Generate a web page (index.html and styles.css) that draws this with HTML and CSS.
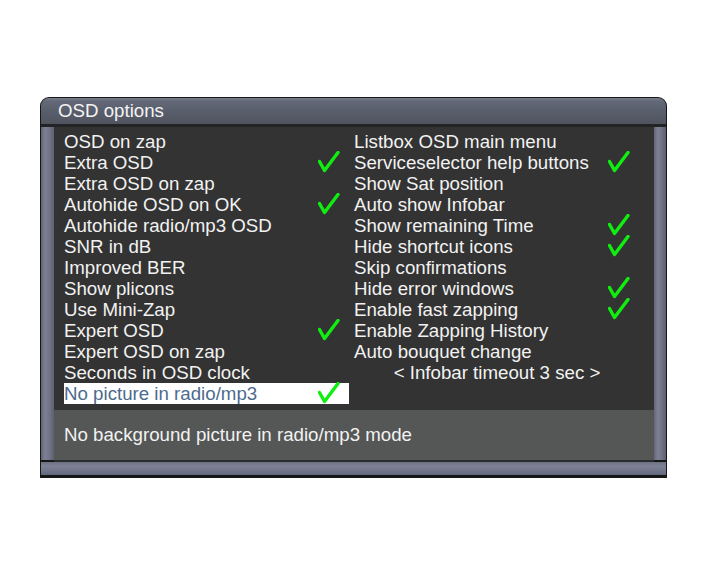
FILE: index.html
```html
<!DOCTYPE html>
<html>
<head>
<meta charset="utf-8">
<link rel="stylesheet" href="styles.css">
</head>
<body>
<svg width="0" height="0" class="defs">
  <symbol id="chk" viewBox="0 0 22 22">
    <path d="M1.5 10.5 L6.5 19.5 L20 1.5" fill="none" stroke="#10ee10" stroke-width="3.4" stroke-linecap="round" stroke-linejoin="round"/>
  </symbol>
</svg>
<div class="window">
  <div class="titlebar">OSD options</div>
  <div class="titleline"></div>
  <div class="frame">
    <div class="panel">
      <div class="list">
        <div class="col">
          <div class="row">OSD on zap</div>
          <div class="row">Extra OSD<svg class="check"><use href="#chk"/></svg></div>
          <div class="row">Extra OSD on zap</div>
          <div class="row">Autohide OSD on OK<svg class="check"><use href="#chk"/></svg></div>
          <div class="row">Autohide radio/mp3 OSD</div>
          <div class="row">SNR in dB</div>
          <div class="row">Improved BER</div>
          <div class="row">Show plicons</div>
          <div class="row">Use Mini-Zap</div>
          <div class="row">Expert OSD<svg class="check"><use href="#chk"/></svg></div>
          <div class="row">Expert OSD on zap</div>
          <div class="row">Seconds in OSD clock</div>
          <div class="row selected">No picture in radio/mp3<svg class="check"><use href="#chk"/></svg></div>
        </div>
        <div class="col">
          <div class="row">Listbox OSD main menu</div>
          <div class="row">Serviceselector help buttons<svg class="check"><use href="#chk"/></svg></div>
          <div class="row">Show Sat position</div>
          <div class="row">Auto show Infobar</div>
          <div class="row">Show remaining Time<svg class="check"><use href="#chk"/></svg></div>
          <div class="row">Hide shortcut icons<svg class="check"><use href="#chk"/></svg></div>
          <div class="row">Skip confirmations</div>
          <div class="row">Hide error windows<svg class="check"><use href="#chk"/></svg></div>
          <div class="row">Enable fast zapping<svg class="check"><use href="#chk"/></svg></div>
          <div class="row">Enable Zapping History</div>
          <div class="row">Auto bouquet change</div>
          <div class="row center">&lt; Infobar timeout 3 sec &gt;</div>
        </div>
      </div>
      <div class="status">No background picture in radio/mp3 mode</div>
    </div>
  </div>
  <div class="bottomline"></div>
  <div class="bottomframe"></div>
</div>
</body>
</html>
```

FILE: styles.css
```css
html, body {
  margin: 0;
  padding: 0;
  background: #ffffff;
}
.defs {
  position: absolute;
  width: 0;
  height: 0;
}
body {
  font-family: "Liberation Sans", Arial, sans-serif;
  font-size: 18.7px;
  color: #f2f2f2;
}
.window {
  margin-left: 40px;
  margin-top: 97px;
  width: 627px;
  background: #161616;
  border-radius: 9px 9px 0 0;
  padding: 1px 1px 3px 1px;
  box-sizing: border-box;
}
.titlebar {
  height: 26px;
  line-height: 25px;
  padding-left: 17px;
  border-radius: 8px 8px 0 0;
  background: linear-gradient(to bottom, #7a7f8e 0px, #646978 3px, #585d6b 14px, #50545f 26px);
  color: #f4f4f4;
}
.titleline {
  height: 3px;
  background: #222325;
}
.frame {
  display: flex;
  padding: 0 12px 0 13px;
  background: linear-gradient(to right, #5e6272 0px, #7d8194 4px, #6e7284 9px, #5c6070 13px, #5c6070 612px, #7d8194 617px, #6e7284 621px, #5a5e6e 625px);
}
.panel {
  width: 600px;
  background: #333333;
}
.list {
  display: flex;
  gap: 5px;
  padding: 3.5px 0 5.5px 10px;
  height: 283px;
  box-sizing: border-box;
}
.col {
  width: 285px;
  display: flex;
  flex-direction: column;
}
.col + .col {
  width: 286px;
}
.row {
  height: 21px;
  line-height: 21px;
  display: flex;
  align-items: center;
  justify-content: space-between;
  white-space: nowrap;
}
.row .check {
  width: 22px;
  height: 22px;
  margin-right: 9px;
  flex: none;
}
.col + .col .row .check {
  margin-right: 10px;
}
.row.selected {
  background: #ffffff;
  color: #4d6a8e;
}
.row.center {
  justify-content: center;
}
.status {
  height: 50px;
  line-height: 49px;
  padding-left: 10px;
  background: #555756;
}
.bottomline {
  height: 2px;
  margin: 0 12px 0 13px;
  background: #2a2b2e;
}
.bottomframe {
  height: 13px;
  background: linear-gradient(to bottom, #6c7082 0px, #7e8295 4px, #71758a 9px, #62667a 13px);
}
```
